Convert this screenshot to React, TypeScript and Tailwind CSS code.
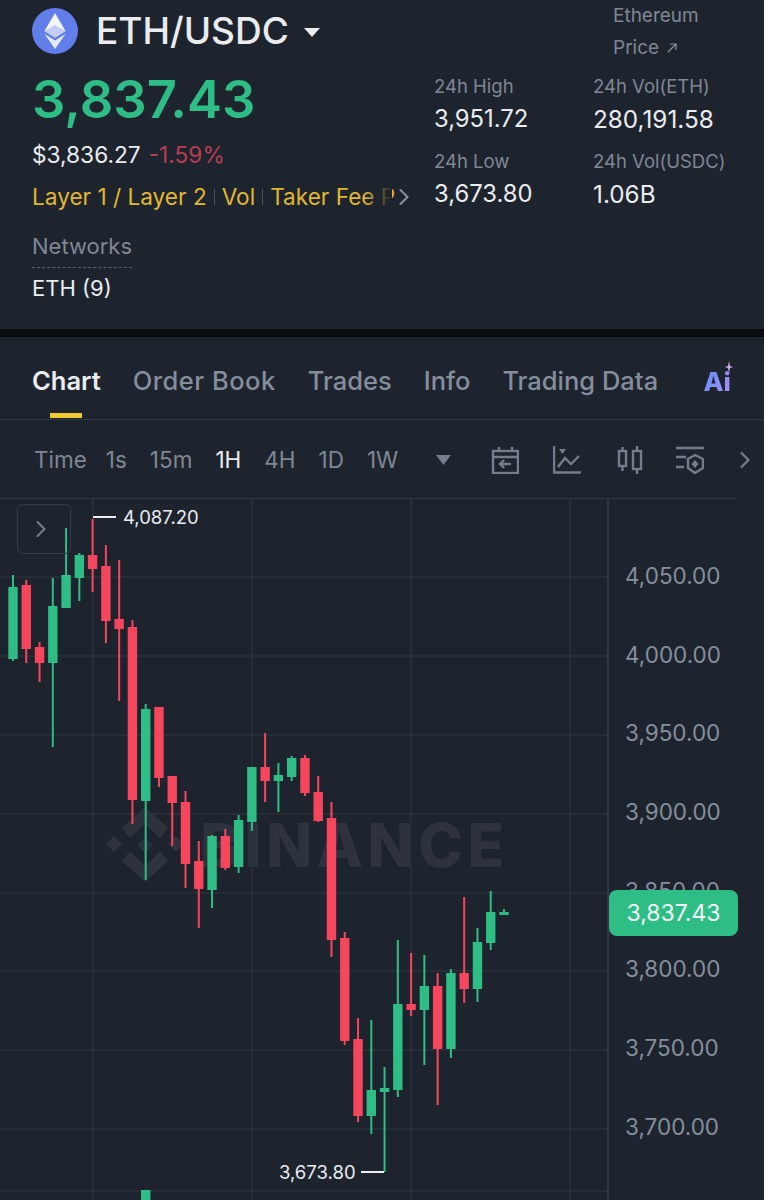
import { ChevronRight } from "lucide-react";

type Candle = [number, number, number, number, "g" | "r"];

// high, body top, body bottom, low (page y)
const CANDLES: Candle[] = [
  [575, 587, 659, 661, "g"],
  [580, 585, 649, 663, "r"],
  [642, 647, 663, 682, "r"],
  [578, 606, 663, 747, "g"],
  [528, 575, 608, 608, "g"],
  [553, 555, 578, 601, "g"],
  [519, 555, 569, 592, "r"],
  [545, 566, 621, 643, "r"],
  [560, 619, 629, 701, "r"],
  [620, 627, 800, 824, "r"],
  [704, 709, 801, 880, "g"],
  [707, 707, 778, 787, "r"],
  [776, 776, 803, 846, "r"],
  [791, 802, 864, 888, "r"],
  [841, 861, 889, 928, "r"],
  [835, 836, 890, 908, "g"],
  [829, 836, 868, 870, "r"],
  [815, 820, 867, 873, "g"],
  [767, 767, 822, 831, "g"],
  [733, 767, 781, 802, "r"],
  [763, 775, 781, 812, "g"],
  [756, 758, 777, 781, "g"],
  [755, 758, 793, 796, "r"],
  [776, 792, 821, 822, "r"],
  [802, 818, 940, 957, "r"],
  [932, 938, 1041, 1045, "r"],
  [1018, 1039, 1116, 1122, "r"],
  [1020, 1090, 1116, 1134, "g"],
  [1067, 1088, 1092, 1172, "g"],
  [940, 1004, 1090, 1097, "g"],
  [953, 1004, 1010, 1016, "r"],
  [955, 986, 1010, 1065, "g"],
  [973, 986, 1049, 1105, "r"],
  [969, 973, 1049, 1058, "g"],
  [897, 973, 989, 1003, "r"],
  [928, 942, 989, 1002, "g"],
  [891, 912, 943, 950, "g"],
  [909, 912, 915, 915, "g"],
];

const GRID_Y = [577, 656, 735, 814, 893, 971, 1050, 1129, 1191];
const GRID_X = [93, 252, 411, 570];
const AXIS = ["4,050.00", "4,000.00", "3,950.00", "3,900.00", "3,850.00", "3,800.00", "3,750.00", "3,700.00"];
const TABS = ["Order Book", "Trades", "Info", "Trading Data"];
const TIMES = ["1s", "15m", "1H", "4H", "1D", "1W"];

function EthLogo() {
  return (
    <svg width="46" height="46" viewBox="0 0 46 46" className="shrink-0">
      <circle cx="23" cy="23" r="23" fill="#627eea" />
      <path d="M23 5 L12.5 23 L23 29.5 L33.5 23 Z" fill="#f4f5fb" />
      <path d="M23 17 L12.5 23 L23 29.5 L33.5 23 Z" fill="#c4cdf3" />
      <path d="M12.5 26 L23 41 L33.5 26 L23 32.5 Z" fill="#e6e9f8" />
    </svg>
  );
}

function Stat({ label, value, big }: { label: string; value: string; big?: boolean }) {
  return (
    <div className="h-[75px]">
      <div className="text-[18.5px] leading-[30px] text-[#7f8793] whitespace-nowrap">{label}</div>
      <div className={`mt-[3px] leading-[30px] text-[#eaecef] whitespace-nowrap ${big ? "text-[24.3px]" : "text-[23.8px]"}`}>{value}</div>
    </div>
  );
}

function ToolIcons() {
  const s = { fill: "none", stroke: "#767d8a", strokeWidth: 2.4 };
  return (
    <div className="flex items-center">
      <svg width="28" height="28" viewBox="0 0 28 28" {...s}>
        <rect x="2" y="5" width="25" height="22" />
        <path d="M2 11 H27 M8 1 V5 M21 1 V5 M20 18 H9 M13 14 L9 18 L13 22" />
      </svg>
      <svg width="28" height="28" viewBox="0 0 28 28" className="ml-[34px]" {...s}>
        <path d="M1 0 V26.500 H28 M5 21 L12 12 L18 18 L26 10" />
        <path d="M6 3 H13 L9.500 8 Z" fill="#767d8a" stroke="none" />
      </svg>
      <svg width="26" height="28" viewBox="0 0 26 28" className="ml-[36px]" {...s}>
        <rect x="2" y="5" width="7" height="15" />
        <rect x="16" y="5" width="8" height="18" />
        <path d="M5.500 1 V5 M5.500 20 V25 M20 0 V5 M20 23 V28" />
      </svg>
      <svg width="28" height="28" viewBox="0 0 28 28" className="ml-[33px]" {...s}>
        <path d="M0 2 H28 M0 11 H10 M0 21 H8" />
        <path d="M19 9 L27 13 V22 L19 27 L12 22 V13 Z" />
        <path d="M19 14 L22.500 18 L19 22 L15.500 18 Z" fill="#767d8a" stroke="none" />
      </svg>
    </div>
  );
}

function ChartCanvas() {
  return (
    <svg viewBox="0 499 764 701" className="absolute inset-0 w-full h-full">
      {GRID_Y.map((y) => (
        <line key={y} x1="0" x2="608" y1={y} y2={y} stroke="#2a303b" strokeWidth="1.500" />
      ))}
      {GRID_X.map((x) => (
        <line key={x} x1={x} x2={x} y1="499" y2="1200" stroke="#2a303b" strokeWidth="1.500" />
      ))}
      <line x1="608" x2="608" y1="499" y2="1200" stroke="#3a404b" strokeWidth="1.500" />

      {/* watermark */}
      <g fill="#2d323d">
        <path d="M114 836 L122 844 L114 852 L106 844 Z" />
        <path d="M145 837 L153 845 L145 853 L137 845 Z" />
        <path d="M176 836 L184 844 L176 852 L168 844 Z" />
        <path d="M145 807 L168 828 L160 838 L145 824 L130 838 L122 828 Z" />
        <path d="M145 882 L168 861 L160 851 L145 866 L130 851 L122 861 Z" />
      </g>
      <text x="200" y="867" fontSize="60" fontWeight="800" fill="#2d323d" textLength="304" fontFamily="Inter, sans-serif">
        BINANCE
      </text>

      {CANDLES.map(([high, top, bottom, low, side], i) => {
        const x = 13 + i * 13.27;
        const fill = side === "g" ? "#2ebd85" : "#f6465d";
        return (
          <g key={i} fill={fill}>
            <rect x={x - 1} y={high} width="2" height={low - high} />
            <rect x={x - 4.700} y={top} width="9.400" height={Math.max(bottom - top, 2)} />
          </g>
        );
      })}
      <rect x="141" y="1190" width="9.400" height="10" fill="#2ebd85" />

      <rect x="93" y="516" width="23" height="2" fill="#eaecef" />
      <rect x="361" y="1171" width="23" height="2" fill="#eaecef" />
    </svg>
  );
}

export default function App() {
  return (
    <div className="w-[764px] h-[1200px] overflow-hidden bg-[#1e242e] font-['Inter',sans-serif] flex flex-col">
      {/* 상단 시세 */}
      <div className="h-[329px] flex shrink-0">
        <div className="w-[434px] pl-8 pt-2 shrink-0">
          <div className="flex items-center">
            <EthLogo />
            <span className="ml-[18px] text-[37px] leading-[46px] font-medium text-[#eaecef] whitespace-nowrap">ETH/USDC</span>
            <svg width="18" height="11" viewBox="0 0 18 11" className="ml-[14px] mt-[2px]">
              <path d="M1 1 H17 L9 10 Z" fill="#eaecef" />
            </svg>
          </div>
          <div className="mt-[14px] text-[52.5px] leading-[62px] font-semibold text-[#2ebd85]">3,837.43</div>
          <div className="mt-[10px] flex gap-2 text-[22.7px] leading-[30px]">
            <span className="text-[#eaecef]">$3,836.27</span>
            <span className="text-[#b93e52]">-1.59%</span>
          </div>
          <div className="mt-3 flex items-center">
            <div className="relative w-[360px] flex items-center gap-[7px] text-[22.6px] leading-[30px] text-[#e0b72e] whitespace-nowrap">
              <span>Layer 1 / Layer 2</span>
              <span className="w-px h-4 bg-[#474d57] shrink-0" />
              <span>Vol</span>
              <span className="w-px h-4 bg-[#474d57] shrink-0" />
              <span>Taker Fee P</span>
              <div className="absolute right-0 inset-y-0 w-7 bg-gradient-to-r from-transparent to-[#1e242e]" />
            </div>
            <ChevronRight size={28} strokeWidth={1.8} className="text-[#848e9c] -ml-[2px] -mr-3" />
          </div>
          <div className="mt-[19px] w-fit border-b border-dashed border-[#5b616d] pb-[6px] text-[22px] leading-[30px] text-[#7f8793]">Networks</div>
          <div className="mt-[5px] text-[22px] leading-[30px] text-[#eaecef]">ETH (9)</div>
        </div>
        <div className="flex-1 min-w-0">
          <div className="pl-[179px] h-[71px] text-[19px] leading-8 text-[#7f8793]">
            <div>Ethereum</div>
            <div className="flex items-center gap-2 whitespace-nowrap">
              Price
              <svg width="10" height="10" viewBox="0 0 10 10" fill="none" stroke="#8b929c" strokeWidth="1.200">
                <path d="M1 9 L9 1 M3 1 H9 V7" />
              </svg>
            </div>
          </div>
          <div className="grid grid-cols-[159px_1fr]">
            <Stat label="24h High" value="3,951.72" />
            <Stat label="24h Vol(ETH)" value="280,191.58" big />
            <Stat label="24h Low" value="3,673.80" />
            <Stat label="24h Vol(USDC)" value="1.06B" big />
          </div>
        </div>
      </div>

      <div className="h-2 bg-[#0b0e11] shrink-0" />

      {/* 탭 */}
      <div className="relative h-[83px] shrink-0 border-b border-[#2f3541] flex items-center pl-8 pr-[33px] text-[25.5px] text-[#848e9c] pt-[7px] whitespace-nowrap">
        <div className="relative font-semibold text-[#eaecef]">
          Chart
          <div className="absolute top-[51px] left-[18px] w-[32px] h-[5px] bg-[#f0cb2f]" />
        </div>
        <div className="flex gap-8 ml-8">
          {TABS.map((t) => (
            <span key={t} className="font-medium first:tracking-[0.5px]">{t}</span>
          ))}
        </div>
        <div className="relative ml-auto font-extrabold text-[26px] bg-gradient-to-br from-[#4f8df7] to-[#b18cf5] bg-clip-text text-transparent">
          Ai
          <svg width="8" height="12" viewBox="0 0 8 12" className="absolute -top-[1px] -right-[2px]">
            <path d="M4 0 L5 5 L8 6 L5 7 L4 12 L3 7 L0 6 L3 5 Z" fill="#d9a8f0" />
          </svg>
        </div>
      </div>

      {/* 툴바 */}
      <div className="relative h-[79px] shrink-0 flex items-center text-[22.5px] text-[#7f8793] pl-[34px] whitespace-nowrap">
        <span>Time</span>
        <div className="flex gap-[23px] ml-[19px]">
          {TIMES.map((t) => (
            <span key={t} className={t === "1H" ? "text-[#eaecef]" : ""}>{t}</span>
          ))}
        </div>
        <svg width="15" height="10" viewBox="0 0 15 10" className="ml-[38px] mr-[40px] shrink-0">
          <path d="M0 0 H15 L7.500 10 Z" fill="#767d8a" />
        </svg>
        <ToolIcons />
        <ChevronRight size={28} strokeWidth={2} className="ml-[27px] text-[#767d8a]" />
        <div className="absolute left-0 bottom-0 w-[736px] h-px bg-[#2f3541]" />
      </div>

      {/* 차트 */}
      <div className="relative flex-1">
        <ChartCanvas />
        <div className="absolute left-[17px] top-[5px] w-[54px] h-[50px] rounded-md border border-[#363c47] flex items-center justify-center pr-[6px]">
          <ChevronRight size={28} strokeWidth={1.800} className="text-[#767d8a]" />
        </div>
        <span className="absolute left-[123px] top-[6px] text-[18.500px] leading-6 text-[#eaecef]">4,087.20</span>
        <span className="absolute left-[279px] top-[661px] text-[18.500px] leading-6 text-[#eaecef]">3,673.80</span>
        <div className="absolute left-[625px] top-[62px] flex flex-col text-[22.500px] leading-[30px] text-[#848e9c] gap-[48.700px]">
          {AXIS.map((v) => (
            <span key={v}>{v}</span>
          ))}
        </div>
        <div className="absolute left-[609px] top-[391px] w-[129px] h-[46px] rounded-lg bg-[#2ebd85] flex items-center justify-center text-[23px] text-[#f4fff9]">
          3,837.43
        </div>
      </div>
    </div>
  );
}
